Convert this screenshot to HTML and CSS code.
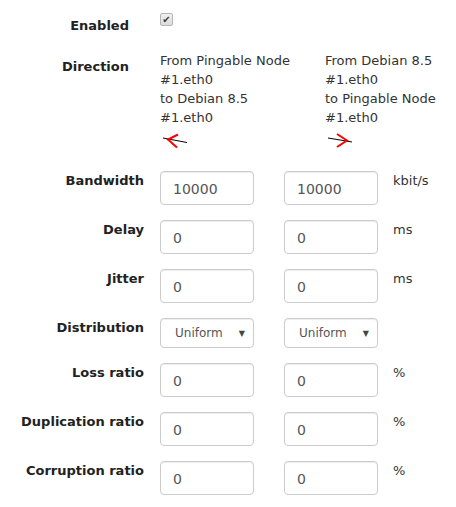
FILE: index.html
```html
<!DOCTYPE html>
<html>
<head>
<meta charset="utf-8">
<link rel="stylesheet" href="styles.css">
</head>
<body>
<div class="page">
  <div class="top">
    <div class="label label-enabled">Enabled</div>
    <div class="cell-enabled"><span class="check">&#10004;</span></div>
    <div class="spacer"></div>

    <div class="label label-direction">Direction</div>
    <div class="dir">
      <div class="dir-text">From Pingable Node<br>#1.eth0<br>to Debian 8.5<br>#1.eth0</div>
      <svg class="arrow" width="30" height="22" viewBox="0 0 30 22">
        <line x1="3" y1="9" x2="27" y2="13.5" stroke="#000" stroke-width="1"/>
        <polyline points="18,5.5 8,10.5 17,18.5" fill="none" stroke="#f00" stroke-width="2"/>
      </svg>
    </div>
    <div class="dir">
      <div class="dir-text">From Debian 8.5<br>#1.eth0<br>to Pingable Node<br>#1.eth0</div>
      <svg class="arrow" width="30" height="22" viewBox="0 0 30 22">
        <line x1="3" y1="9" x2="27" y2="13" stroke="#000" stroke-width="1"/>
        <polyline points="12,5 22,11.5 12,18" fill="none" stroke="#f00" stroke-width="2"/>
      </svg>
    </div>
  </div>

  <div class="grid">
    <div class="label">Bandwidth</div>
    <input class="field" type="text" value="10000">
    <input class="field" type="text" value="10000">
    <div class="unit">kbit/s</div>

    <div class="label">Delay</div>
    <input class="field" type="text" value="0">
    <input class="field" type="text" value="0">
    <div class="unit">ms</div>

    <div class="label">Jitter</div>
    <input class="field" type="text" value="0">
    <input class="field" type="text" value="0">
    <div class="unit">ms</div>

    <div class="label">Distribution</div>
    <div class="select"><span>Uniform</span><span class="caret">&#9660;</span></div>
    <div class="select"><span>Uniform</span><span class="caret">&#9660;</span></div>
    <div class="unit"></div>

    <div class="label">Loss ratio</div>
    <input class="field" type="text" value="0">
    <input class="field" type="text" value="0">
    <div class="unit">%</div>

    <div class="label">Duplication ratio</div>
    <input class="field" type="text" value="0">
    <input class="field" type="text" value="0">
    <div class="unit">%</div>

    <div class="label">Corruption ratio</div>
    <input class="field" type="text" value="0">
    <input class="field" type="text" value="0">
    <div class="unit">%</div>
  </div>
</div>
</body>
</html>
```

FILE: styles.css
```css
html, body {
  margin: 0;
  padding: 0;
  background: #fff;
}
body {
  font-family: "DejaVu Sans", Verdana, sans-serif;
  font-size: 13px;
  line-height: 19px;
  color: #333;
}
.page {
  padding-top: 13px;
}
.top {
  display: grid;
  grid-template-columns: 160px 165px 1fr;
  row-gap: 15px;
  align-items: start;
}
.top .label {
  padding-right: 31px;
}
.label {
  font-weight: bold;
  text-align: right;
  color: #222;
}
.label-enabled {
  padding-top: 3px;
}
.label-direction {
  padding-top: 7px;
}
.cell-enabled {
  height: 22px;
}
.check {
  display: flex;
  align-items: center;
  justify-content: center;
  width: 11px;
  height: 11px;
  border: 1px solid #b5b5b5;
  border-radius: 2px;
  background: linear-gradient(#f0f0f0, #dcdcdc);
  color: #3c3c3c;
  font-size: 10px;
  line-height: 10px;
}
.dir {
  padding-top: 0.5px;
}
.arrow {
  display: block;
  margin-top: 2px;
}
.grid {
  display: grid;
  grid-template-columns: 160px 124px 109px 1fr;
  row-gap: 15px;
  align-items: start;
  margin-top: 20px;
}
.grid .label {
  padding-right: 16px;
}
.field {
  box-sizing: border-box;
  width: 94px;
  height: 34px;
  margin: 0;
  padding: 7px 12px 5px;
  border: 1px solid #ccc;
  border-radius: 4px;
  box-shadow: inset 0 1px 1px rgba(0,0,0,0.075);
  font-family: "DejaVu Sans", Verdana, sans-serif;
  font-size: 14px;
  color: #555;
  background: #fff;
  outline: none;
}
.select {
  box-sizing: border-box;
  width: 94px;
  height: 30px;
  display: flex;
  align-items: center;
  justify-content: space-between;
  padding: 1px 8px 0 14px;
  border: 1px solid #ccc;
  border-radius: 4px;
  box-shadow: inset 0 1px 1px rgba(0,0,0,0.075);
  font-size: 12px;
  color: #555;
}
.caret {
  font-size: 8px;
  color: #444;
}
.unit {
  color: #333;
}
```
